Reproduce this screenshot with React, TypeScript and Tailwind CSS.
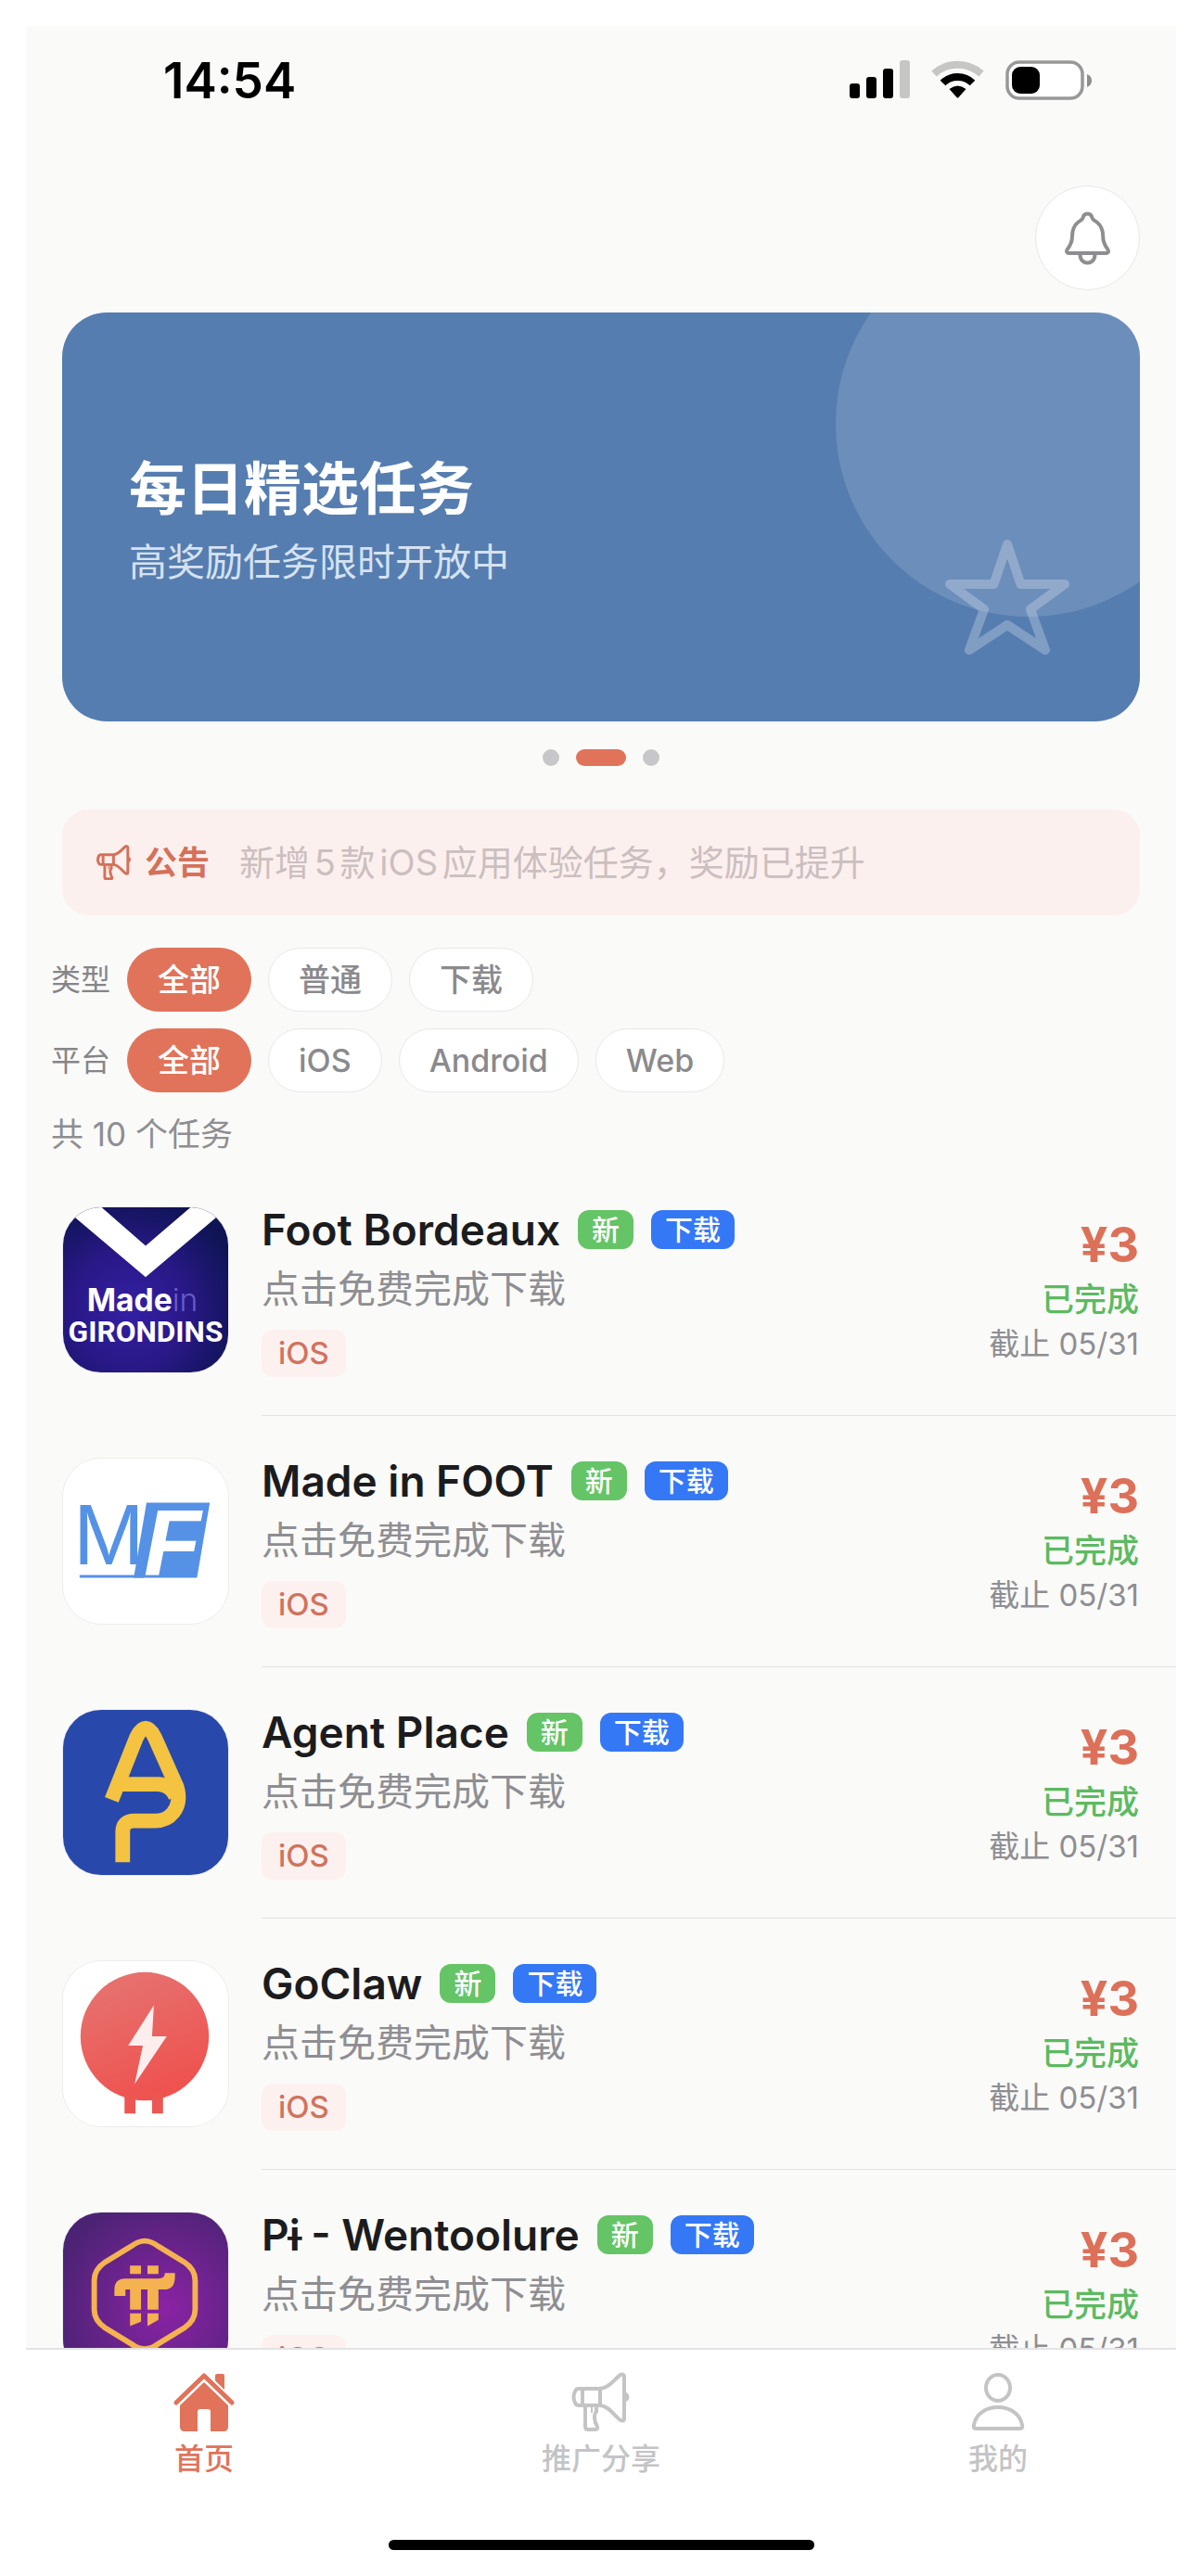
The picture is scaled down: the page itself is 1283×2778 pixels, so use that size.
import type { ReactNode } from "react";
import { clsx } from "clsx";

type Task = {
  name: string;
  desc: string;
  platform: string;
  price: string;
  deadline: string;
  logo: ReactNode;
};

const TYPES = ["全部", "普通", "下载"];
const PLATFORMS = ["全部", "iOS", "Android", "Web"];

function SignalIcon() {
  return (
    <svg width="65" height="42" viewBox="0 0 65 42" aria-hidden="true">
      <rect x="0" y="25" width="11" height="16" rx="3" />
      <rect x="18" y="18" width="11" height="23" rx="3" />
      <rect x="36" y="9" width="11" height="32" rx="3" />
      <rect x="54" y="0" width="11" height="41" rx="3" fill="#c6c6c4" />
    </svg>
  );
}

function WifiIcon() {
  return (
    <svg width="57" height="42" viewBox="0 0 57 42" fill="none" aria-hidden="true">
      <path d="M3 14.5a38 38 0 0 1 51 0" stroke="#c6c6c4" strokeWidth="8" />
      <path d="M12.500 24.500a23 23 0 0 1 32 0" stroke="#000" strokeWidth="8" />
      <path d="M19.500 31q9-7 18 0l-8 9q-1 1-2 0z" fill="#000" />
    </svg>
  );
}

function BatteryIcon() {
  return (
    <svg width="93" height="43" viewBox="0 0 93 43" aria-hidden="true">
      <rect x="2" y="2" width="81" height="39" rx="13" fill="#fff" stroke="#989898" strokeWidth="3.500" />
      <rect x="7" y="7" width="30" height="29" rx="9" />
      <path d="M88 15q5 2 5 7t-5 7z" fill="#8e8e8e" />
    </svg>
  );
}

function BellIcon() {
  return (
    <svg width="49" height="58" viewBox="0 0 49 58" fill="none" stroke="#8e8e92" strokeWidth="4" strokeLinejoin="round" aria-hidden="true">
      <path d="M24.500 2.500c-3 0-4.500 2-5 4.500-.8 2.500-3 3-5 4.500C10 15 8 20 8 27c0 7-2.500 10-5 13.500C1 43.500 2.500 45 4.500 45h40c2 0 3.500-1.500 1.500-4.500-2.500-3.500-4.800-6.500-4.800-13.500 0-7-2.200-12-6.700-15.500-2-1.500-4.200-2-5-4.500-.5-2.500-2-4.500-5-4.500z" />
      <path d="M16.500 46.500c0 12 16 12 16 0" />
    </svg>
  );
}

function StarIcon({ className }: { className?: string }) {
  return (
    <svg className={className} width="134" height="126" viewBox="0 0 134 126" fill="none" stroke="#fff" strokeOpacity=".25" strokeWidth="10" strokeLinejoin="round" aria-hidden="true">
      <path d="M67 6l14.500 43H129L92 76l16 44-41-27-41 27 16-44L5 49h47.500z" />
    </svg>
  );
}

function MegaphoneIcon({ className, strokeWidth = 4 }: { className?: string; strokeWidth?: number }) {
  return (
    <svg className={className} viewBox="0 0 64 64" fill="none" stroke="currentColor" strokeWidth={strokeWidth} strokeLinejoin="round" aria-hidden="true">
      <path d="M31 18C41 17 46 8 53 3c2-1 4 0 4 2v45c0 3-2 3-4 2-7-5-12-15-22-16" />
      <path d="M31 18H8q-3 0-4 3-3 6 0 12 1 3 4 3h23z" />
      <path d="M12 18v18" />
      <path d="M15 36v23q0 3 3 3h8q3 0 2-3-3-5-3-10 0-5 2-6v-7" />
      <path d="M22 37v7" strokeWidth="2" />
      <path d="M58 22q4 1 4 5t-4 5z" fill="currentColor" strokeWidth="1" />
    </svg>
  );
}

function HomeIcon({ className }: { className?: string }) {
  return (
    <svg className={className} viewBox="0 0 66 64" fill="currentColor" aria-hidden="true">
      <path d="M45 4q0-2 2-2h6q2 0 2 2v22L45 16z" />
      <path d="M33 11l26 25v23q0 5-5 5H40V43q0-3-3-3h-8q-3 0-3 3v21H12q-5 0-5-5V36z" />
      <path d="M3 33L33 4l30 29" fill="none" stroke="#fff" strokeWidth="9" />
      <path d="M3 33L33 4l30 29" fill="none" stroke="currentColor" strokeWidth="5" strokeLinecap="round" strokeLinejoin="round" />
    </svg>
  );
}

function PersonIcon({ className }: { className?: string }) {
  return (
    <svg className={className} viewBox="0 0 58 64" fill="none" stroke="currentColor" strokeWidth="4" strokeLinejoin="round" aria-hidden="true">
      <ellipse cx="29" cy="17" rx="13" ry="14" />
      <path d="M5 61q-3 0-2-4c2-11 12-19 26-19s24 8 26 19q1 4-2 4z" />
    </svg>
  );
}

function BordeauxLogo() {
  return (
    <svg viewBox="0 0 180 180" className="size-full">
      <radialGradient id="bordeaux" cx="40%" cy="62%" r="70%">
        <stop offset="0" stopColor="#3420a4" />
        <stop offset=".5" stopColor="#291887" />
        <stop offset="1" stopColor="#0e1454" />
      </radialGradient>
      <rect width="180" height="180" fill="url(#bordeaux)" />
      <path d="M0 0h42l48 42 49-42h41L90 76z" fill="#fff" />
      <text x="26" y="113" fontSize="34" fontWeight="700" fill="#fff">
        Made<tspan fontWeight="300" fill="#6a5cc8">in</tspan>
      </text>
      <text x="90" y="147" textAnchor="middle" fontSize="32" fontWeight="700" fill="#fff" className="font-['Roboto',sans-serif]">
        GIRONDINS
      </text>
    </svg>
  );
}

function FootLogo() {
  return (
    <svg viewBox="0 0 180 180" className="size-full">
      <rect width="180" height="180" fill="#fff" />
      <path d="M91 48h69l-14 82H77z" fill="#5592e6" />
      <path d="M18 128.500h70" stroke="#5592e6" strokeWidth="3" />
      <text x="11" y="115" fontSize="93" fill="#5592e6" className="font-['Liberation_Sans',sans-serif]">M</text>
      <text x="88" y="126" fontSize="102" fontWeight="700" fontStyle="italic" fill="#fff" className="font-['Liberation_Sans',sans-serif]">F</text>
    </svg>
  );
}

function AgentLogo() {
  return (
    <svg viewBox="0 0 180 180" className="size-full">
      <rect width="180" height="180" fill="#2849ab" />
      <g fill="none" stroke="#f3c341" strokeWidth="16">
        <path d="M53 98l27-68q10-20 20 0l24 54q5 17-4 28-7 9-20 9H78q-13 0-13 12v33" />
        <path d="M60 81h44q14 1 19 14" />
      </g>
    </svg>
  );
}

function ClawLogo() {
  return (
    <svg viewBox="0 0 180 180" className="size-full">
      <linearGradient id="claw" x1="0" y1="0" x2=".4" y2="1">
        <stop offset="0" stopColor="#e57673" />
        <stop offset="1" stopColor="#ee5350" />
      </linearGradient>
      <rect width="180" height="180" fill="#fff" />
      <circle cx="89" cy="82" r="70" fill="url(#claw)" />
      <path d="M67 145h12v21H67zM97 145h12v21H97z" fill="#ec5653" />
      <path d="M99 48L71 92h16l-9 42 35-52H97z" fill="#fdeeee" />
    </svg>
  );
}

function PiLogo() {
  return (
    <svg viewBox="0 0 180 180" className="size-full">
      <radialGradient id="pi" cx="62%" cy="58%" r="70%">
        <stop offset="0" stopColor="#8b23a5" />
        <stop offset="1" stopColor="#4b2374" />
      </radialGradient>
      <rect width="180" height="180" fill="url(#pi)" />
      <path d="M89 31q7 0 15 6l28 17q12 8 12 20v32q0 12-12 20l-28 17q-15 12-30 0l-28-17q-12-8-12-20V74q0-12 12-20l28-17q8-6 15-6z" fill="none" stroke="#f4b250" strokeWidth="6" />
      <g fill="#f4b250">
        <path d="M73 58h12v9H73zM92 58h12v9H92z" />
        <path d="M56 91v-7q0-12 12-12h36q7 0 7-6h11v4q0 14-12 14h-6v22H92V84h-7v22H73V84h-5v7z" />
        <path d="M73 110h12v9l-12 5zM92 110h12v7l-12 7z" />
      </g>
    </svg>
  );
}

const TASKS: Task[] = [
  { name: "Foot Bordeaux", logo: <BordeauxLogo /> },
  { name: "Made in FOOT", logo: <FootLogo /> },
  { name: "Agent Place", logo: <AgentLogo /> },
  { name: "GoClaw", logo: <ClawLogo /> },
  { name: "Pɨ̇ - Wentoolure", logo: <PiLogo /> },
].map((task) => ({
  ...task,
  desc: "点击免费完成下载",
  platform: "iOS",
  price: "¥3",
  deadline: "05/31",
}));

function FilterRow({ label, options }: { label: string; options: string[] }) {
  return (
    <div className="flex items-center gap-[18px]">
      <span className="text-[32px] leading-[48px] text-[#85858a]">{label}</span>
      {options.map((option, i) => (
        <button
          key={option}
          type="button"
          aria-pressed={i === 0}
          className={clsx(
            "h-[69px] rounded-full border px-8 text-[34px] font-medium",
            i === 0 ? "border-[#e0735a] bg-[#e0735a] text-white" : "border-[#e8e8e8] bg-white text-[#8a8a8d]"
          )}
        >
          {option}
        </button>
      ))}
    </div>
  );
}

function TaskRow({ task }: { task: Task }) {
  return (
    <li className="flex shrink-0 pl-[39px]">
      <div className="mt-[45px] size-[180px] shrink-0 overflow-hidden rounded-[42px] border border-[#ececec]">{task.logo}</div>
      <div className="ml-[35px] flex flex-1 items-center justify-between border-b border-[#e2e2e2] pt-11 pr-10 pb-[41px]">
        <div>
          <div className="flex items-center gap-[19px]">
            <h2 className="text-[46px] leading-[52px] font-semibold text-[#1c1c1e]">{task.name}</h2>
            <span className="rounded-[12px] bg-[#65c466] px-[15px] text-[30px] leading-[42px] font-medium text-white">新</span>
            <span className="rounded-[12px] bg-[#3478f6] px-[15px] text-[30px] leading-[42px] font-medium text-white">下载</span>
          </div>
          <p className="mt-3.5 text-[41px] leading-[48px] text-[#8e8e93]">{task.desc}</p>
          <span className="mt-5 block w-fit rounded-[12px] bg-[#fdf1ef] px-[18px] text-[33px] leading-[51px] font-medium text-[#d0735e]">
            {task.platform}
          </span>
        </div>
        <div className="flex flex-col items-end">
          <span className="mb-1 text-[52px] leading-[60px] font-bold text-[#dd7059]">{task.price}</span>
          <span className="text-[35px] leading-[48px] font-medium text-[#5cba62]">已完成</span>
          <span className="text-[33px] leading-[48px] text-[#8e8e93]">截止 {task.deadline}</span>
        </div>
      </div>
    </li>
  );
}

export default function App() {
  return (
    <div className="h-screen bg-white pt-7 pr-[15px] pb-7 pl-7 font-['Inter','Noto_Sans_CJK_SC',sans-serif]">
      <div className="flex h-full flex-col overflow-hidden bg-[#fafaf8]">
        <div className="flex shrink-0 items-center justify-between pt-7 pr-[91px] pl-[148px]">
          <time className="text-[53px] leading-[62px] font-semibold text-black">14:54</time>
          <div className="flex items-center gap-[23px] pb-0.5">
            <SignalIcon />
            <WifiIcon />
            <BatteryIcon />
          </div>
        </div>

        <header className="mt-[82px] flex shrink-0 justify-end px-[39px]">
          <button type="button" aria-label="通知" className="flex size-[113px] items-center justify-center rounded-full border border-[#e8e8e8] bg-white">
            <BellIcon />
          </button>
        </header>

        <section className="relative mx-[39px] mt-6 flex h-[441px] shrink-0 flex-col justify-center overflow-hidden rounded-[48px] bg-[#567db0] px-[72px] pt-2">
          <div className="absolute -top-[88px] -right-[88px] size-[416px] rounded-full bg-white/13" />
          <StarIcon className="absolute right-[76px] bottom-[71px]" />
          <h1 className="text-[62px] leading-[76px] font-bold text-white">每日精选任务</h1>
          <p className="mt-3 text-[41px] leading-[56px] text-[#d5e2f1]">高奖励任务限时开放中</p>
        </section>

        <div className="mt-[30px] flex shrink-0 justify-center gap-[18px]">
          <span className="size-[18px] rounded-full bg-[#c7c7c9]" />
          <span className="h-[18px] w-[54px] rounded-full bg-[#e0735a]" />
          <span className="size-[18px] rounded-full bg-[#c7c7c9]" />
        </div>

        <div className="mx-[39px] mt-[47px] flex h-[114px] shrink-0 items-center rounded-[28px] bg-[#fcf0ee] px-[37px]">
          <MegaphoneIcon className="size-[38px] text-[#d5705a]" strokeWidth={5} />
          <strong className="ml-3.5 text-[35px] leading-[50px] font-bold text-[#d5705a]">公告</strong>
          <p className="ml-8 text-[38px] leading-[50px] whitespace-nowrap text-[#cbbfbf] [text-autospace:normal]">新增5款iOS应用体验任务，奖励已提升</p>
        </div>

        <div className="mt-[35px] flex shrink-0 flex-col gap-[18px] pl-[27px]">
          <FilterRow label="类型" options={TYPES} />
          <FilterRow label="平台" options={PLATFORMS} />
        </div>
        <p className="mt-5 shrink-0 pl-[27px] text-[35px] leading-[50px] text-[#8e8e93]">共 10 个任务</p>

        <ul className="mt-2 flex min-h-0 flex-1 flex-col overflow-hidden">
          {TASKS.map((task) => (
            <TaskRow key={task.name} task={task} />
          ))}
        </ul>

        <nav className="flex shrink-0 flex-col items-center border-t-2 border-[#e3e3e5] bg-white">
          <div className="flex w-full justify-between px-[120px] pt-6">
            <a href="#home" className="flex w-36 flex-col items-center gap-2.5 text-[#e0735a]">
              <HomeIcon className="h-16" />
              <span className="text-[32px] leading-[40px] font-medium">首页</span>
            </a>
            <a href="#share" className="flex w-36 flex-col items-center gap-2.5 text-[#c4c4c6]">
              <MegaphoneIcon className="h-16" />
              <span className="text-[32px] leading-[40px] font-medium">推广分享</span>
            </a>
            <a href="#me" className="flex w-36 flex-col items-center gap-2.5 text-[#c4c4c6]">
              <PersonIcon className="h-16" />
              <span className="text-[32px] leading-[40px] font-medium">我的</span>
            </a>
          </div>
          <div className="mt-[67px] h-[11px] w-[459px] rounded-full bg-black" />
        </nav>
      </div>
    </div>
  );
}
